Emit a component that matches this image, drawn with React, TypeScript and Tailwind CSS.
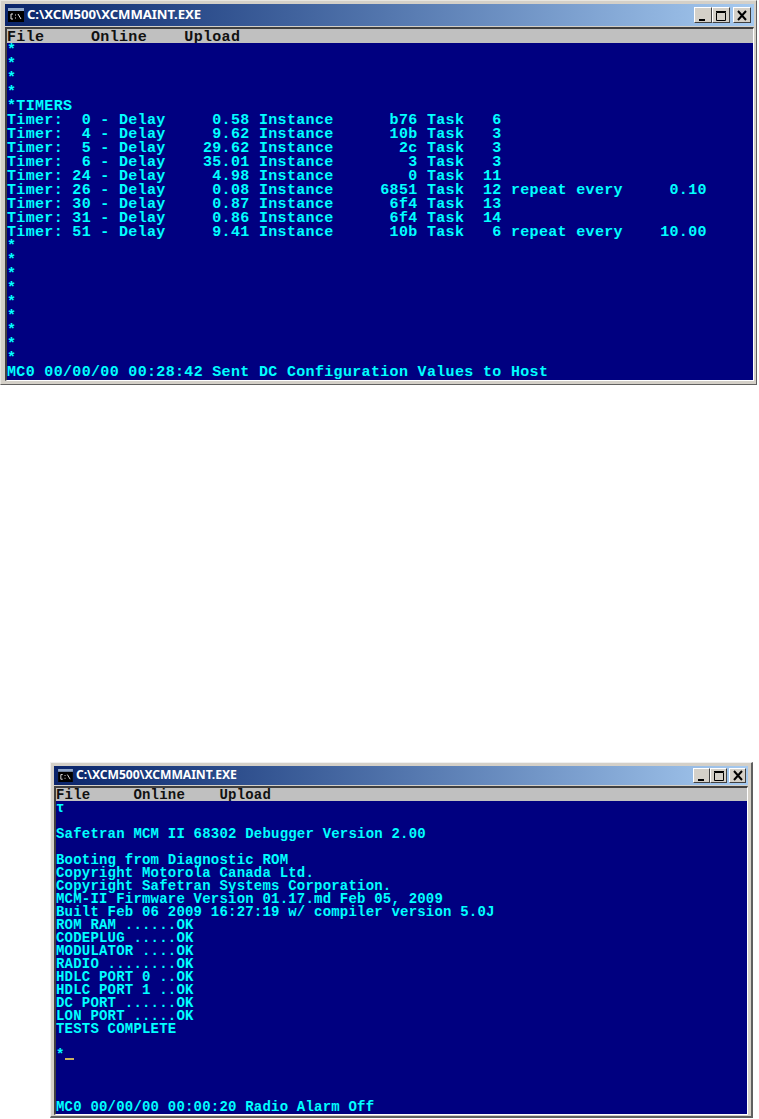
const timerLines = [
  "*",
  "*",
  "*",
  "*",
  "*TIMERS",
  "Timer:  0 - Delay     0.58 Instance      b76 Task   6",
  "Timer:  4 - Delay     9.62 Instance      10b Task   3",
  "Timer:  5 - Delay    29.62 Instance       2c Task   3",
  "Timer:  6 - Delay    35.01 Instance        3 Task   3",
  "Timer: 24 - Delay     4.98 Instance        0 Task  11",
  "Timer: 26 - Delay     0.08 Instance     6851 Task  12 repeat every     0.10",
  "Timer: 30 - Delay     0.87 Instance      6f4 Task  13",
  "Timer: 31 - Delay     0.86 Instance      6f4 Task  14",
  "Timer: 51 - Delay     9.41 Instance      10b Task   6 repeat every    10.00",
  "*",
  "*",
  "*",
  "*",
  "*",
  "*",
  "*",
  "*",
  "*",
  "MC0 00/00/00 00:28:42 Sent DC Configuration Values to Host",
];

const bootLines = [
  "τ",
  " ",
  "Safetran MCM II 68302 Debugger Version 2.00",
  " ",
  "Booting from Diagnostic ROM",
  "Copyright Motorola Canada Ltd.",
  "Copyright Safetran Systems Corporation.",
  "MCM-II Firmware Version 01.17.md Feb 05, 2009",
  "Built Feb 06 2009 16:27:19 w/ compiler version 5.0J",
  "ROM RAM ......OK",
  "CODEPLUG .....OK",
  "MODULATOR ....OK",
  "RADIO ........OK",
  "HDLC PORT 0 ..OK",
  "HDLC PORT 1 ..OK",
  "DC PORT ......OK",
  "LON PORT .....OK",
  "TESTS COMPLETE",
  " ",
  "*",
  " ",
  " ",
  " ",
  "MC0 00/00/00 00:00:20 Radio Alarm Off",
];

const ConsoleIcon = ({ w, h }: { w: number; h: number }) => (
  <svg width={w} height={h} viewBox="0 0 16 14" className="shrink-0">
    <rect width="16" height="14" fill="#8fa6c8" />
    <rect x="0" y="3" width="16" height="11" fill="#000" />
    <path d="M5 6H3v5h2M7 7h1M7 10h1M10 6l3 5" stroke="#e8e8e8" fill="none" />
  </svg>
);

const CtrlButton = ({ kind, big }: { kind: "min" | "max" | "close"; big: boolean }) => (
  <div
    className={`flex items-center justify-center bg-[#d4d0c8] border-t border-l border-t-white border-l-white border-b border-r border-b-[#404040] border-r-[#404040] ${
      big ? "w-[18px] h-[16px]" : "w-[17px] h-[15px]"
    }`}
  >
    <svg width="12" height="11" viewBox="0 0 12 11">
      {kind === "min" && <path d="M2 9h6v2H2z" fill="#000" />}
      {kind === "max" && <path d="M1.5 2.5h9v8h-9zM1 1.5h10" stroke="#000" fill="none" strokeWidth="1" />}
      {kind === "close" && <path d="M2 1l8 9M10 1l-8 9" stroke="#000" strokeWidth="2" fill="none" />}
    </svg>
  </div>
);

const App = () => {
  return (
    <div className="w-[759px] h-[1119px] bg-white overflow-hidden">
      {/* Timers window */}
      <div className="w-[757px] h-[385px] bg-[#d4d0c8] pt-[3px] pl-[4px] pr-[2px] pb-[5px] border border-t-[#e8e6e0] border-l-[#e8e6e0] border-b-[#606060] border-r-[#606060] flex flex-col">
        <div className="h-[22px] shrink-0 flex items-center pl-[3px] pr-[3px] bg-gradient-to-r from-[#0a246a] to-[#a6caf0]">
          <ConsoleIcon w={16} h={14} />
          <span className="ml-[3px] text-white font-bold text-[13.2px] tracking-[-0.1px] font-['Noto_Sans',sans-serif]">C:\XCM500\XCMMAINT.EXE</span>
          <div className="ml-auto flex">
            <CtrlButton kind="min" big />
            <CtrlButton kind="max" big />
            <div className="w-[3px]" />
            <CtrlButton kind="close" big />
          </div>
        </div>
        <div className="mt-[1px] border-t-2 border-l-2 border-r border-b border-t-[#404040] border-l-[#404040] border-r-white border-b-white flex-1 flex flex-col font-['Liberation_Mono',monospace] font-bold text-[15px] leading-[14px] tracking-[0.33px] whitespace-pre">
          <div className="h-[14px] pt-[2px] bg-[#c0c0c0] text-[#111] shrink-0">File     Online    Upload</div>
          <div className="flex-1 pt-[1px] bg-[#000080] text-[#00ffff] overflow-hidden">
            {timerLines.map((line, i) => (
              <div key={i} className="h-[14px]">{line}</div>
            ))}
          </div>
        </div>
      </div>

      {/* Boot window */}
      <div className="ml-[50px] mt-[377px] w-[703px] h-[356px] bg-[#d4d0c8] pt-[3px] pl-[3px] pr-[3px] pb-[2px] border-t border-l border-b-2 border-r-2 border-t-[#f0f0f0] border-l-[#f0f0f0] border-b-[#606060] border-r-[#606060] flex flex-col">
        <div className="h-[19px] shrink-0 flex items-center pl-[4px] pr-[2px] bg-gradient-to-r from-[#0a246a] to-[#a6caf0]">
          <ConsoleIcon w={15} h={13} />
          <span className="ml-[3px] text-white font-bold text-[12.2px] tracking-[-0.1px] font-['Noto_Sans',sans-serif]">C:\XCM500\XCMMAINT.EXE</span>
          <div className="ml-auto flex">
            <CtrlButton kind="min" big={false} />
            <CtrlButton kind="max" big={false} />
            <div className="w-[2px]" />
            <CtrlButton kind="close" big={false} />
          </div>
        </div>
        <div className="mt-[1px] border-t-2 border-l-2 border-r border-b border-t-[#404040] border-l-[#404040] border-r-white border-b-white flex-1 flex flex-col font-['Liberation_Mono',monospace] font-bold text-[14px] leading-[13px] tracking-[0.2px] whitespace-pre">
          <div className="h-[13px] pt-[1px] bg-[#c0c0c0] text-[#111] shrink-0">File     Online    Upload</div>
          <div className="flex-1 pt-[1px] bg-[#000080] text-[#00ffff] relative overflow-hidden">
            {bootLines.map((line, i) => (
              <div key={i} className="h-[13px]">{line}</div>
            ))}
            <div className="absolute left-[9px] top-[257px] w-[9px] h-[2px] bg-[#c8b060]" />
          </div>
        </div>
      </div>
    </div>
  );
};

export default App;
